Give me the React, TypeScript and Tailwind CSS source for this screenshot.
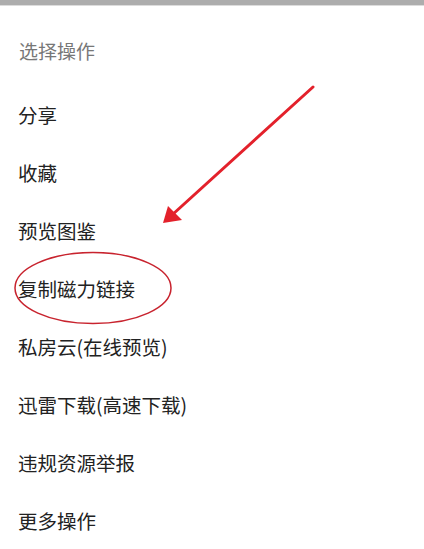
const items = [
  "分享",
  "收藏",
  "预览图鉴",
  "复制磁力链接",
  "私房云(在线预览)",
  "迅雷下载(高速下载)",
  "违规资源举报",
  "更多操作",
]

export default function App() {
  return (
    <div
      className="relative w-[424px] h-[549px] overflow-hidden bg-white"
      style={{ fontFamily: '"Noto Sans CJK SC", "Noto Sans", sans-serif' }}
    >
      <div className="h-[5px] bg-[#adadad]" />
      <div className="h-[1px] bg-[#dcdcdc]" />

      <div className="mt-[16px] h-[58px] flex items-center px-[19px] text-[19px] text-[#777777]">
        选择操作
      </div>

      <ul className="mt-[6px]">
        {items.map((label) => (
          <li
            key={label}
            className="h-[58px] flex items-center px-[18px] text-[19.5px] text-[#222222]"
          >
            {label}
          </li>
        ))}
      </ul>

      {/* annotation overlay */}
      <svg
        className="absolute inset-0 pointer-events-none"
        width="424"
        height="549"
        viewBox="0 0 424 549"
      >
        <line x1="313" y1="87" x2="172" y2="215" stroke="#e3212b" strokeWidth="3" strokeLinecap="round" />
        <polygon points="163,223 168,206 182,220" fill="#e3212b" />
        <ellipse cx="93" cy="288" rx="78" ry="35.5" fill="none" stroke="#c8232e" strokeWidth="1.5" />
      </svg>
    </div>
  )
}
